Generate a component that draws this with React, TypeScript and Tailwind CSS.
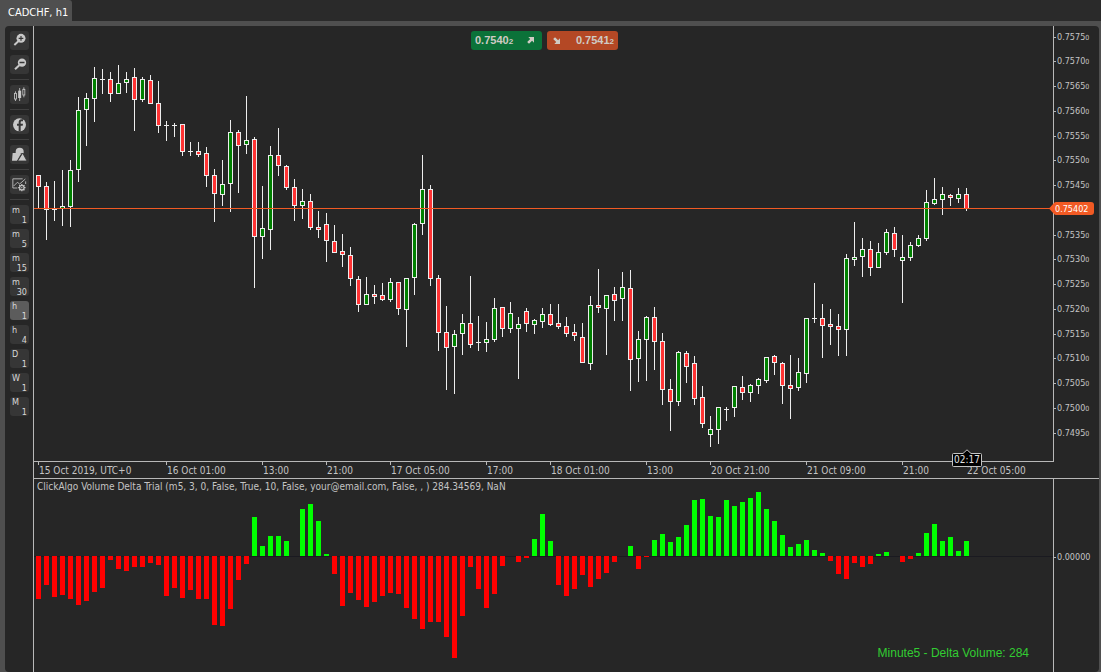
import React from "react";

type Candle = [high: number, top: number, bottom: number, low: number, kind: "R" | "G" | "D"];

const FIRST_X = 38;
const STEP = 8;

// Offsets are measured from the top of the window; PLOT_TOP brings them into the plot.
const PLOT_TOP = 26;
const PLOT_LEFT = 34;

const CANDLES: Candle[] = [
  [175, 175, 187, 208, "R"], [182, 186, 210, 240, "R"], [181, 209, 210, 221, "D"], [170, 206, 209, 226, "G"],
  [160, 170, 207, 227, "G"], [97, 110, 170, 182, "G"], [93, 98, 110, 146, "G"], [67, 78, 99, 122, "G"],
  [69, 79, 80, 94, "D"], [72, 79, 94, 102, "R"], [65, 83, 94, 94, "G"], [72, 79, 83, 93, "G"],
  [68, 77, 100, 131, "R"], [77, 79, 100, 102, "G"], [75, 80, 104, 104, "R"], [81, 103, 126, 133, "R"],
  [121, 125, 126, 141, "D"], [123, 125, 126, 137, "D"], [124, 124, 152, 156, "R"], [142, 151, 152, 156, "D"],
  [142, 151, 155, 157, "R"], [147, 153, 176, 187, "R"], [169, 175, 194, 222, "R"], [160, 184, 195, 206, "G"],
  [120, 132, 184, 212, "G"], [130, 132, 146, 193, "R"], [96, 140, 145, 154, "G"], [137, 139, 237, 288, "R"],
  [186, 228, 237, 259, "G"], [146, 155, 230, 250, "G"], [128, 155, 166, 176, "R"], [165, 166, 188, 190, "R"],
  [179, 187, 206, 221, "R"], [189, 201, 206, 219, "G"], [194, 201, 228, 230, "R"], [211, 227, 230, 238, "R"],
  [213, 224, 241, 262, "R"], [225, 241, 253, 253, "R"], [234, 251, 255, 267, "R"], [247, 255, 279, 286, "R"],
  [276, 279, 305, 312, "R"], [277, 294, 305, 305, "G"], [285, 294, 297, 304, "R"], [283, 295, 300, 301, "R"],
  [278, 282, 300, 302, "G"], [282, 282, 309, 315, "R"], [278, 278, 310, 347, "G"], [223, 224, 278, 295, "G"],
  [155, 189, 224, 235, "G"], [185, 189, 279, 286, "R"], [275, 278, 333, 351, "R"], [306, 332, 348, 390, "R"],
  [330, 334, 347, 394, "G"], [314, 323, 334, 355, "G"], [276, 323, 345, 348, "R"], [316, 342, 343, 351, "D"],
  [322, 339, 343, 352, "G"], [298, 308, 340, 342, "G"], [307, 307, 329, 337, "R"], [302, 313, 329, 333, "G"],
  [317, 324, 329, 379, "G"], [308, 311, 324, 332, "R"], [319, 320, 325, 334, "G"], [308, 314, 322, 328, "G"],
  [304, 314, 325, 326, "R"], [304, 323, 327, 329, "R"], [317, 326, 334, 337, "R"], [324, 332, 336, 341, "R"],
  [323, 337, 363, 363, "R"], [296, 305, 364, 370, "G"], [269, 305, 308, 313, "R"], [295, 295, 309, 355, "G"],
  [287, 294, 301, 321, "R"], [272, 287, 299, 321, "G"], [270, 288, 360, 391, "R"], [331, 339, 359, 382, "G"],
  [316, 317, 340, 381, "G"], [307, 317, 342, 370, "R"], [333, 341, 390, 405, "R"], [379, 389, 402, 431, "R"],
  [351, 352, 402, 406, "G"], [351, 353, 367, 383, "R"], [356, 363, 399, 405, "R"], [386, 397, 424, 428, "R"],
  [416, 429, 435, 447, "G"], [407, 407, 430, 444, "G"], [407, 409, 410, 421, "D"], [386, 386, 408, 417, "G"],
  [376, 387, 393, 400, "R"], [384, 385, 393, 402, "G"], [378, 379, 386, 394, "G"], [357, 357, 381, 383, "G"],
  [355, 356, 363, 375, "R"], [362, 363, 386, 404, "R"], [355, 385, 389, 419, "R"], [358, 372, 388, 391, "G"],
  [318, 318, 374, 383, "G"], [283, 318, 319, 323, "D"], [304, 318, 326, 358, "R"], [309, 324, 327, 345, "R"],
  [314, 326, 330, 356, "R"], [254, 258, 330, 356, "G"], [222, 257, 260, 266, "G"], [238, 249, 257, 277, "G"],
  [241, 249, 268, 276, "R"], [243, 252, 268, 268, "G"], [229, 232, 253, 255, "G"], [227, 233, 250, 257, "R"],
  [235, 257, 261, 303, "G"], [242, 245, 258, 261, "G"], [235, 238, 246, 247, "G"], [190, 202, 239, 241, "G"],
  [178, 199, 204, 205, "G"], [187, 194, 200, 215, "G"], [194, 195, 198, 206, "R"], [188, 194, 199, 203, "G"],
  [188, 194, 209, 211, "R"],
];

const DELTAS: number[] = [
  -43, -29, -41, -39, -43, -49, -45, -36, -32, -4, -13, -15, -11, -11, -7, -9, -40, -32, -42, -34, -43, -43, -69,
  -70, -53, -24, -8, 39, 10, 20, 20, 15, 0, 47, 52, 35, 2, -18, -50, -37, -44, -51, -46, -40, -37, -38, -52, -63,
  -73, -66, -66, -81, -102, -60, -11, -33, -52, -38, -10, 0, -6, -2, 17, 42, 15, -29, -40, -33, -19, -31, -23, -17,
  -6, 0, 10, -13, -1, 16, 22, 14, 19, 31, 56, 57, 40, 39, 56, 50, 54, 58, 64, 47, 35, 21, 9, 12, 16, 6, 3, -5, -18,
  -23, -7, -11, -8, 2, 4, 0, -6, -3, 3, 23, 32, 15, 19, 5, 15,
];

const PRICES = [
  "0.7575", "0.7570", "0.7565", "0.7560", "0.7555", "0.7550", "0.7545", "", "0.7535", "0.7530", "0.7525", "0.7520",
  "0.7515", "0.7510", "0.7505", "0.7500", "0.7495",
];

const TIMES = [
  "15 Oct 2019, UTC+0", "16 Oct 01:00", "13:00", "21:00", "17 Oct 05:00", "17:00", "18 Oct 01:00", "13:00",
  "20 Oct 21:00", "21 Oct 09:00", "21:00", "22 Oct 05:00",
];

const FRAMES: [string, string][] = [
  ["m", "1"], ["m", "5"], ["m", "15"], ["m", "30"], ["h", "1"], ["h", "4"], ["D", "1"], ["W", "1"], ["M", "1"],
];

function Icon({ children }: { children: React.ReactNode }) {
  return (
    <svg viewBox="0 0 57 57" className="size-full" fill="none" stroke="none" aria-hidden="true">
      {children}
    </svg>
  );
}

const LIGHT = "#c8c8c8";
const DARK = "#363636";

const ZoomIn = (
  <Icon>
    <path d="M25 31 13 42" stroke={LIGHT} strokeWidth="6" />
    <circle cx="33" cy="22" r="13.5" fill={LIGHT} />
    <path d="M26 22h14M33 15v14" stroke={DARK} strokeWidth="3.5" />
  </Icon>
);

const ZoomOut = (
  <Icon>
    <path d="M28 31 15 43" stroke={LIGHT} strokeWidth="6" />
    <circle cx="36" cy="23" r="12.5" fill={LIGHT} />
    <path d="M28.5 22.500h15" stroke={DARK} strokeWidth="4" />
  </Icon>
);

const CandlesIcon = (
  <Icon>
    <path d="M16.500 19v6M16.500 42v6M29 9v39M41.500 7v6M41.500 30v7" stroke={LIGHT} strokeWidth="2.5" />
    <rect x="13.500" y="25" width="6" height="17" stroke={LIGHT} strokeWidth="2.5" />
    <rect x="24.500" y="17" width="9" height="22" fill={LIGHT} />
    <rect x="38.500" y="13" width="6" height="17" stroke={LIGHT} strokeWidth="2.5" />
  </Icon>
);

const FacebookIcon = (
  <Icon>
    <circle cx="28.500" cy="29.500" r="19.500" fill={LIGHT} />
    <path
      d="M26 49V32h-5v-6h5v-4c0-6 3-9 8.500-9H39v6h-3.500c-2.500 0-3.500 1-3.500 3.500V26h7l-1 6h-6v17z"
      fill={DARK}
    />
  </Icon>
);

const ShapesIcon = (
  <Icon>
    <path d="M17 20a12 12 0 0 1 24 0v5H17z" fill={LIGHT} />
    <path d="M8 24h24v4L21 47H6z" fill={LIGHT} />
    <path d="M38 24 51 48H23z" fill={LIGHT} stroke={DARK} strokeWidth="2.500" />
  </Icon>
);

const ChartSettings = (
  <Icon>
    <path d="M22 39H8.500V11.500H38M47 19V27" stroke={LIGHT} strokeWidth="2.500" />
    <path d="m11 33 11-11 7 5 17-15" stroke={LIGHT} strokeWidth="2.500" />
    <circle cx="35.500" cy="38" r="9" fill={LIGHT} stroke={DARK} strokeWidth="1" />
    <path
      d="M35.500 27v22M24.500 38h22M27.700 30.200l15.600 15.600M43.300 30.200 27.700 45.800"
      stroke={LIGHT}
      strokeWidth="3.500"
    />
    <circle cx="35.500" cy="38" r="5" fill={DARK} />
    <circle cx="35.500" cy="38" r="2" fill={LIGHT} />
  </Icon>
);

function ToolButton({ label, active, children }: { label: string; active?: boolean; children: React.ReactNode }) {
  return (
    <button
      type="button"
      aria-label={label}
      className={
        active
          ? "block size-[19px] shrink-0 rounded-[3px] bg-[#5c5c5c]"
          : "block size-[19px] shrink-0 rounded-[3px] bg-[#363636]"
      }
    >
      {children}
    </button>
  );
}

const Separator = () => <hr className="h-px w-[19px] shrink-0 border-0 bg-[#404040]" />;

function Toolbar() {
  return (
    <nav className="flex w-7 shrink-0 flex-col items-start gap-[5px] pt-[5px] pl-[5px]">
      <ToolButton label="Zoom in">{ZoomIn}</ToolButton>
      <ToolButton label="Zoom out">{ZoomOut}</ToolButton>
      <Separator />
      <ToolButton label="Chart type">{CandlesIcon}</ToolButton>
      <Separator />
      <ToolButton label="Share">{FacebookIcon}</ToolButton>
      <Separator />
      <ToolButton label="Objects">{ShapesIcon}</ToolButton>
      <Separator />
      <ToolButton label="Chart settings">{ChartSettings}</ToolButton>
      <Separator />
      {FRAMES.map(([unit, count]) => (
        <ToolButton key={unit + count} label={unit + count} active={unit === "h" && count === "1"}>
          <span className="flex h-full flex-col justify-between px-0.5 pt-px text-[9px] leading-[8px] text-[#d8d8d8]">
            <span className="text-left">{unit}</span>
            <span className="text-right">{count}</span>
          </span>
        </ToolButton>
      ))}
    </nav>
  );
}

function CandleChart() {
  return (
    <svg height="435" className="block w-full" shapeRendering="crispEdges" role="img" aria-label="CADCHF price">
      {CANDLES.map(([high, top, bottom, low, kind], i) => {
        const x = FIRST_X + STEP * i - PLOT_LEFT;
        return (
          <g key={i} fill="#ededed">
            <rect x={x} y={high - PLOT_TOP} width="1" height={low - high} />
            <rect x={x - 2} y={top - PLOT_TOP} width="5" height={bottom - top} />
            {kind !== "D" && (
              <rect
                x={x - 1}
                y={top - PLOT_TOP + 1}
                width="3"
                height={bottom - top - 2}
                fill={kind === "R" ? "#ff3334" : "#008000"}
              />
            )}
          </g>
        );
      })}
      <rect x="0" y="182" width="100%" height="1" fill="#f15a24" />
    </svg>
  );
}

function DeltaChart() {
  return (
    <svg height="190" className="block w-full" shapeRendering="crispEdges" role="img" aria-label="Volume delta">
      <rect x="0" y="77" width="100%" height="1" fill="#1a1a20" />
      {DELTAS.map((value, i) => (
        <rect
          key={i}
          x={FIRST_X + STEP * i - PLOT_LEFT - 2}
          y={value > 0 ? 77 - value : 77}
          width="5"
          height={Math.abs(value)}
          fill={value > 0 ? "#00ff00" : "#ff0000"}
        />
      ))}
    </svg>
  );
}

function QuoteButtons() {
  return (
    <div className="absolute inset-x-0 top-[5px] flex justify-center gap-[5px] pl-0.5 font-['Liberation_Sans',Arial,sans-serif] text-[11px] font-bold text-[#cfcbc4]">
      <button
        type="button"
        className="flex h-[19px] w-[71px] items-center justify-between rounded-[3px] bg-[#0b7239] pr-2 pl-1"
      >
        <span>
          0.7540<span className="text-[8px]">2</span>
        </span>
        <svg viewBox="0 0 8 8" className="size-[7px]" aria-hidden="true">
          <path d="M1.500 0H8v6.500L5.800 4.300 2.300 7.800.2 5.700 3.700 2.200z" fill="currentColor" />
        </svg>
      </button>
      <button
        type="button"
        className="flex h-[19px] w-[71px] items-center justify-between rounded-[3px] bg-[#b44825] pr-1 pl-1.5"
      >
        <svg viewBox="0 0 8 8" className="size-[7px]" aria-hidden="true">
          <path d="M1.500 8H8V1.500L5.800 3.700 2.300.2.200 2.300l3.500 3.500z" fill="currentColor" />
        </svg>
        <span>
          0.7541<span className="text-[8px]">2</span>
        </span>
      </button>
    </div>
  );
}

function PriceAxis() {
  return (
    <div className="relative flex w-[46px] shrink-0 flex-col justify-between border-l border-[#b8b8b8] pt-[3px] pb-5 text-[9px] leading-4">
      {PRICES.map((price, i) => (
        <div key={i} className="flex h-4 items-center gap-px">
          <span className={price ? "h-px w-0.5 bg-[#b8b8b8]" : "h-px w-0.5"} />
          {price && (
            <span>
              {price}
              <span className="text-[7px]">0</span>
            </span>
          )}
        </div>
      ))}
      <div className="absolute top-[176px] -left-[5px] flex h-[13px] w-[45px] items-center">
        <svg viewBox="0 0 45 13" className="absolute inset-0 size-full" aria-hidden="true">
          <path d="M0 6.500 5 1q1-1 2-1h35q3 0 3 3v7q0 3-3 3H7q-1 0-2-1z" fill="#f15a24" />
        </svg>
        <span className="relative pl-1.5 text-white">0.75402</span>
      </div>
    </div>
  );
}

function TimeAxis() {
  return (
    <div className="flex h-[17px]">
      <div className="relative grid min-w-0 flex-1 grid-cols-[128px_96px_64px_64px_96px_64px_96px_64px_96px_96px_64px_1fr] border-t border-[#b8b8b8] pl-1 text-[10px] leading-[18px] whitespace-nowrap">
        {TIMES.map((time, i) => (
          <div key={i} className="flex h-4 min-w-0 items-start">
            <span className="h-[3px] w-px shrink-0 bg-[#b8b8b8]" />
            <span>{time}</span>
          </div>
        ))}
        <div className="absolute -top-[13px] left-[918px] flex h-[18px] w-[30px] items-end justify-center">
          <svg viewBox="0 0 30 18" className="absolute inset-0 size-full" aria-hidden="true">
            <path
              d="M1.500 4.500H11L15 .8l4 3.700h9.500q1 0 1 1v11q0 1-1 1h-27q-1 0-1-1v-11q0-1 1-1z"
              fill="#000"
              stroke="#c4c4c4"
            />
          </svg>
          <span className="relative leading-[14px] text-[#e0e0e0]">02:17</span>
        </div>
      </div>
      <div className="w-[45px] shrink-0" />
    </div>
  );
}

export default function App() {
  return (
    <div className="flex min-h-screen flex-col bg-[#4f4f4f] font-['DejaVu_Sans_Condensed','DejaVu_Sans',sans-serif] text-[#c4c4c4]">
      <header className="flex h-[21px] bg-[#2a2a2a]">
        <button type="button" className="rounded-tr-[3px] bg-[#4f4f4f] pt-1 pr-1 pl-2 text-[11px] leading-4 text-white">
          CADCHF, h1
        </button>
      </header>
      <main className="mt-[5px] mr-0.5 ml-[5px] flex flex-1 overflow-hidden rounded-[4px] bg-[#262626]">
        <Toolbar />
        <div className="flex min-w-0 flex-1 flex-col border-l border-[#b8b8b8]">
          <section className="flex">
            <div className="relative min-w-0 flex-1">
              <CandleChart />
              <QuoteButtons />
            </div>
            <PriceAxis />
          </section>
          <TimeAxis />
          <section className="flex flex-1 border-t border-[#b8b8b8]">
            <div className="relative min-w-0 flex-1">
              <DeltaChart />
              <h2 className="absolute top-0 left-[3px] text-[10px] leading-4 whitespace-nowrap">
                ClickAlgo Volume Delta Trial (m5, 3, 0, False, True, 10, False, your@email.com, False, , ) 284.34569, NaN
              </h2>
              <p className="absolute right-6 bottom-[11px] font-['Liberation_Sans',Arial,sans-serif] text-[12px] leading-4 text-[#32cd32]">
                Minute5 - Delta Volume: 284
              </p>
            </div>
            <div className="w-[46px] shrink-0 border-l border-[#b8b8b8] pt-[70px] text-[9px] leading-4">
              <div className="flex h-4 items-center gap-px">
                <span className="h-px w-0.5 bg-[#b8b8b8]" />
                <span>0.00000</span>
              </div>
            </div>
          </section>
        </div>
      </main>
    </div>
  );
}
